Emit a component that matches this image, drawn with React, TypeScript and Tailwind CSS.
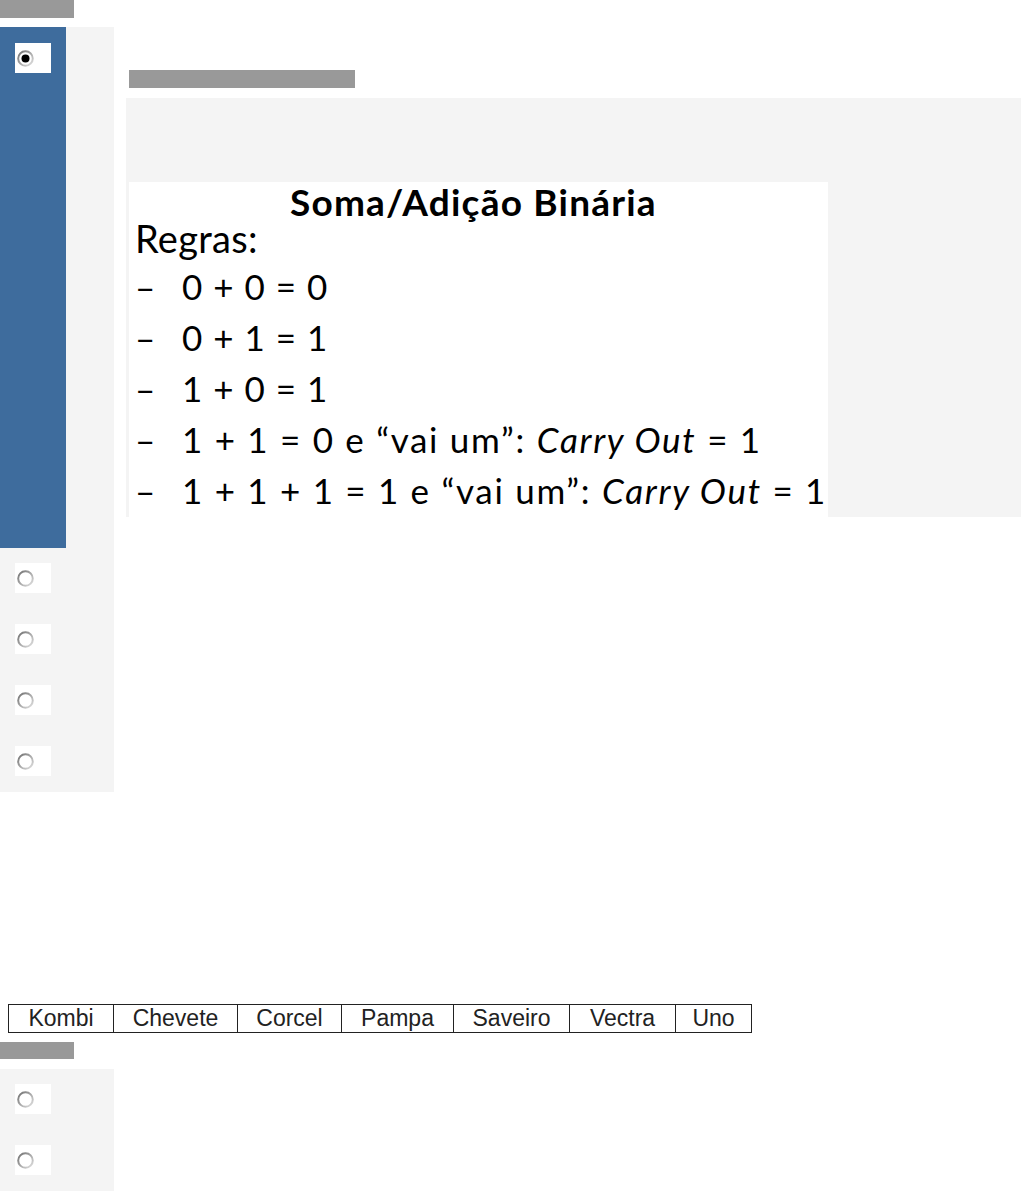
import React from "react";

function Radio({ checked = false }: { checked?: boolean }) {
  return (
    <div className="w-[36px] h-[30px] bg-white flex items-center pl-[2px]">
      <svg width="17" height="17" viewBox="0 0 17 17">
        <defs>
          <linearGradient id={checked ? "rg1" : "rg0"} x1="0" y1="0" x2="1" y2="1">
            <stop offset="0" stopColor="#707070" />
            <stop offset="0.5" stopColor="#a8a8a8" />
            <stop offset="1" stopColor="#e2e2e2" />
          </linearGradient>
        </defs>
        <circle cx="8.5" cy="8.5" r="7.3" fill="#fff" stroke={checked ? "url(#rg1)" : "url(#rg0)"} strokeWidth="2" />
        {checked && <circle cx="8.5" cy="8.5" r="4" fill="#000" />}
      </svg>
    </div>
  );
}

const lines: [React.ReactNode, boolean][] = [
  [<>0 + 0 = 0</>, false],
  [<>0 + 1 = 1</>, false],
  [<>1 + 0 = 1</>, false],
  [
    <>
      1 + 1 = 0 e “vai um”: <i>Carry Out</i> = 1
    </>,
    true,
  ],
  [
    <>
      1 + 1 + 1 = 1 e “vai um”: <i>Carry Out</i> = 1
    </>,
    true,
  ],
];

const cars: [string, number][] = [
  ["Kombi", 104],
  ["Chevete", 124],
  ["Corcel", 104],
  ["Pampa", 112],
  ["Saveiro", 116],
  ["Vectra", 106],
  ["Uno", 76],
];

export default function App() {
  return (
    <div className="w-[1021px] min-h-[1191px] bg-white" style={{ fontFamily: "Lato, 'Liberation Sans', sans-serif" }}>
      <div className="w-[74px] h-[18px] bg-[#999999]" />
      <div className="mt-[9px]">
        <div className="flex">
          <div className="w-[66px] bg-[#3e6c9d] pt-[16px] pl-[15px]">
            <Radio checked />
          </div>
          <div className="w-[48px] bg-[#f4f4f4]" />
          <div className="flex-1 pt-[43px] pb-[31px]">
            <div className="ml-[15px] w-[226px] h-[18px] bg-[#999999]" />
            <div className="mt-[10px] ml-[12px] bg-[#f4f4f4] pt-[84px] pl-[3px]">
              <div className="w-[699px] h-[335px] bg-white text-black relative">
                <div className="absolute left-[161px] top-[0px] text-[37px] font-bold leading-[40px] tracking-[1.2px] whitespace-nowrap">
                  Soma/Adição Binária
                </div>
                <div className="absolute left-[6px] top-[34px] text-[38px] leading-[44px] tracking-[0.3px] whitespace-nowrap">
                  Regras:
                </div>
                <div className="absolute left-[6px] top-[79px] flex flex-col">
                  {lines.map(([l, wide], i) => (
                    <div key={i} className="flex h-[51px] items-center text-[35px] whitespace-nowrap">
                      <span className="w-[47px]">–</span>
                      <span className={wide ? "tracking-[1.7px]" : "tracking-[1px]"}>{l}</span>
                    </div>
                  ))}
                </div>
              </div>
            </div>
          </div>
        </div>
        {[0, 1, 2, 3].map((i) => (
          <div key={i} className="w-[114px] h-[61px] bg-[#f4f4f4] pt-[15px] pl-[15px]">
            <Radio />
          </div>
        ))}
      </div>
      <div className="mt-[212px] ml-[8px] flex w-max border border-[#222] h-[29px]" style={{ fontFamily: "'Liberation Sans', Arial, sans-serif" }}>
        {cars.map(([c, w], i) => (
          <div
            key={c}
            className={`flex items-center justify-center text-[23px] text-[#222] leading-none ${i > 0 ? "border-l border-[#222]" : ""}`}
            style={{ width: w }}
          >
            {c}
          </div>
        ))}
      </div>
      <div className="mt-[9px] w-[74px] h-[17px] bg-[#999999]" />
      <div className="mt-[10px]">
        {[0, 1].map((i) => (
          <div key={i} className="w-[114px] h-[61px] bg-[#f4f4f4] pt-[15px] pl-[15px]">
            <Radio />
          </div>
        ))}
      </div>
    </div>
  );
}
